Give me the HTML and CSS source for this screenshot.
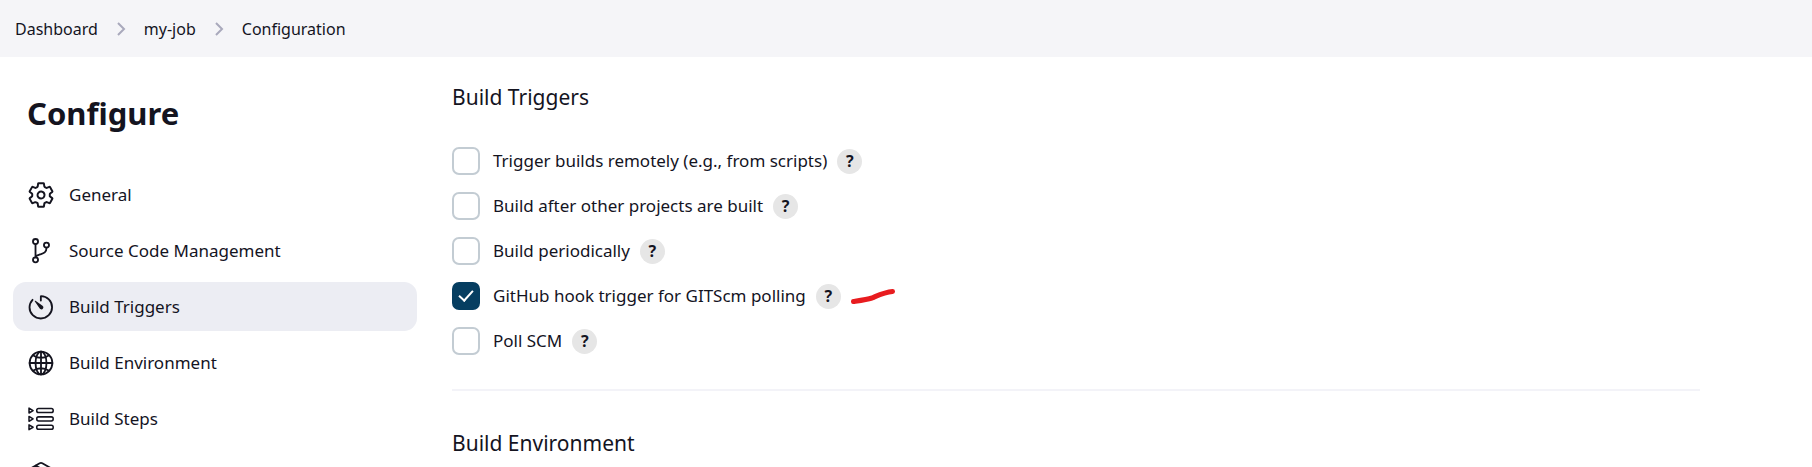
FILE: index.html
```html
<!DOCTYPE html>
<html lang="en">
<head>
<meta charset="utf-8">
<title>my-job Configuration</title>
<link rel="stylesheet" href="styles.css">
</head>
<body>
<nav class="breadcrumbs" aria-label="Breadcrumb">
  <a href="#">Dashboard</a>
  <svg class="chevron" viewBox="0 0 8 14"><path d="M1 1l6 6-6 6"/></svg>
  <a href="#">my-job</a>
  <svg class="chevron" viewBox="0 0 8 14"><path d="M1 1l6 6-6 6"/></svg>
  <a href="#">Configuration</a>
</nav>
<div class="page">
  <aside class="sidebar">
    <h1 class="sidebar-title">Configure</h1>
    <nav class="tasks" aria-label="Configure">
      <a class="task" href="#general">
        <svg class="icon" viewBox="0 0 512 512"><g transform="translate(-20 -20) scale(1.08)"><path d="M262.29 192.31a64 64 0 1057.4 57.4 64.13 64.13 0 00-57.4-57.4zM416.39 256a154.34 154.34 0 01-1.53 20.79l45.21 35.46a10.81 10.81 0 012.45 13.75l-42.77 74a10.81 10.81 0 01-13.14 4.59l-44.9-18.08a16.11 16.11 0 00-15.17 1.75A164.48 164.48 0 01325 400.8a15.94 15.94 0 00-8.82 12.14l-6.73 47.89a11.08 11.08 0 01-10.68 9.17h-85.54a11.11 11.11 0 01-10.69-8.87l-6.72-47.82a16.07 16.07 0 00-9-12.22 155.3 155.3 0 01-21.46-12.57 16 16 0 00-15.11-1.71l-44.89 18.07a10.81 10.81 0 01-13.14-4.58l-42.77-74a10.8 10.8 0 012.45-13.75l38.21-30a16.05 16.05 0 006-14.08c-.36-4.17-.58-8.33-.58-12.5s.21-8.27.58-12.35a16 16 0 00-6.07-13.94l-38.19-30A10.81 10.81 0 0149.48 186l42.77-74a10.81 10.81 0 0113.14-4.59l44.9 18.08a16.11 16.11 0 0015.17-1.75A164.48 164.48 0 01187 111.2a15.94 15.94 0 008.82-12.14l6.73-47.89A11.08 11.08 0 01213.23 42h85.54a11.11 11.11 0 0110.69 8.87l6.72 47.82a16.07 16.07 0 009 12.22 155.3 155.3 0 0121.46 12.57 16 16 0 0015.11 1.71l44.89-18.07a10.81 10.81 0 0113.14 4.58l42.77 74a10.8 10.8 0 01-2.45 13.75l-38.21 30a16.05 16.05 0 00-6.05 14.08c.33 4.14.55 8.3.55 12.47z"/></g></svg>
        General
      </a>
      <a class="task" href="#scm">
        <svg class="icon" viewBox="0 0 512 512"><circle cx="148" cy="70" r="50"/><circle cx="148" cy="430" r="50"/><circle cx="364" cy="140" r="50"/><path d="M148 380V120M364 190c0 100-60 112-130 134-56 18-86 26-86 56"/></svg>
        Source Code Management
      </a>
      <a class="task task-active" href="#triggers" aria-current="true">
        <svg class="icon" viewBox="0 0 512 512"><path d="M90 114A218 218 0 0030 260c-1 122 98 222 222 222 122 0 222-98 222-220 0-120-97-218-216-220a5 5 0 00-5 5V130"/><path class="solid" d="M231 285l-96-138a9 9 0 0113-13l138 96a38 38 0 01-44 64 38 38 0 01-11-9z"/></svg>
        Build Triggers
      </a>
      <a class="task" href="#environment">
        <svg class="icon" viewBox="0 0 512 512"><circle cx="256" cy="256" r="224"/><ellipse cx="256" cy="256" rx="108" ry="224"/><path d="M256 32v448M32 256h448M106 106c41 29 93 46 150 46s109-17 150-46M406 406c-41-29-93-46-150-46s-109 17-150 46"/></svg>
        Build Environment
      </a>
      <a class="task" href="#steps">
        <svg class="icon icon-fine" viewBox="0 0 512 512"><rect x="172" y="50" width="324" height="80" rx="36"/><rect x="172" y="214" width="324" height="80" rx="36"/><rect x="172" y="378" width="324" height="80" rx="36"/><path d="M20 42v96l80-48zM20 206v96l80-48zM20 370v96l80-48z"/></svg>
        Build Steps
      </a>
      <a class="task" href="#post-build" aria-label="Post-build Actions">
        <svg class="icon" viewBox="0 0 512 512"><path d="M464 355V157a50 50 0 00-26-44L282 26a52 52 0 00-52 0L74 113a50 50 0 00-26 44v198a50 50 0 0026 44l156 87a52 52 0 0052 0l156-87a50 50 0 0026-44zM54 136l202 116 202-116M256 486V252M152 70l204 118"/></svg>
      </a>
    </nav>
  </aside>
  <main class="content">
    <section id="triggers">
      <h2 class="section-title">Build Triggers</h2>
      <div class="options">
        <div class="option">
          <input class="check" type="checkbox" id="remote"><label for="remote">Trigger builds remotely (e.g., from scripts)</label>
          <button class="help" type="button" aria-label="Help for remote builds">?</button>
        </div>
        <div class="option">
          <input class="check" type="checkbox" id="after"><label for="after">Build after other projects are built</label>
          <button class="help" type="button" aria-label="Help for upstream projects">?</button>
        </div>
        <div class="option">
          <input class="check" type="checkbox" id="periodic"><label for="periodic">Build periodically</label>
          <button class="help" type="button" aria-label="Help for periodic builds">?</button>
        </div>
        <div class="option">
          <input class="check" type="checkbox" id="github" checked><label for="github">GitHub hook trigger for GITScm polling</label>
          <button class="help" type="button" aria-label="Help for GitHub hook">?</button>
          <svg class="mark" viewBox="0 0 44 16"><path d="M2.500 13.500C9 12.500 16 11.500 21 10c7-3 13-6 20.500-6.500"/></svg>
        </div>
        <div class="option">
          <input class="check" type="checkbox" id="poll"><label for="poll">Poll SCM</label>
          <button class="help" type="button" aria-label="Help for Poll SCM">?</button>
        </div>
      </div>
    </section>
    <section class="next-section" id="environment">
      <h2 class="section-title">Build Environment</h2>
    </section>
  </main>
</div>
</body>
</html>
```
FILE: styles.css
```css
* {
  box-sizing: border-box;
}

html {
  height: 100%;
  overflow: hidden;
}

body {
  height: 100%;
  margin: 0;
  overflow: hidden;
  background: #fff;
  color: #14141f;
  font: 17px/24px "Noto Sans", "Open Sans", sans-serif;
}

a {
  color: inherit;
  text-decoration: none;
}

.breadcrumbs {
  display: flex;
  align-items: center;
  gap: 19px;
  padding: 17px 15px 16px;
  background: #f5f5f8;
  font-size: 16px;
}

.chevron {
  width: 8px;
  height: 14px;
  fill: none;
  stroke: #a9a9bc;
  stroke-width: 2;
  overflow: visible;
}

.page {
  display: flex;
}

.sidebar {
  flex: 0 0 417px;
  padding: 36px 0 0 13px;
}

.sidebar-title {
  margin: 0 0 37px 14px;
  font-size: 31px;
  line-height: 40px;
  font-weight: 700;
}

.tasks {
  display: flex;
  flex-direction: column;
  gap: 7px;
}

.task {
  display: flex;
  align-items: center;
  gap: 15px;
  height: 49px;
  padding: 0 15px;
  border-radius: 13px;
}

.task-active {
  background: #ecedf3;
}

.icon {
  flex: none;
  width: 26px;
  height: 26px;
  fill: none;
  stroke: #14141f;
  stroke-width: 36;
  stroke-linecap: round;
  stroke-linejoin: round;
}

.icon-fine {
  stroke-width: 30;
}

.icon .solid {
  fill: #14141f;
  stroke: none;
}

.content {
  flex: 1;
  padding: 24px 112px 0 35px;
}

.section-title {
  margin: 0;
  font-size: 21px;
  line-height: 32px;
  font-weight: 400;
}

.options {
  display: flex;
  flex-direction: column;
  gap: 17px;
  padding: 34px 0;
}

.option {
  display: flex;
  align-items: center;
  height: 28px;
  gap: 10px;
}

.check {
  appearance: none;
  display: grid;
  place-items: center;
  width: 28px;
  height: 28px;
  margin: 0 3px 0 0;
  border: 2px solid #c3ccd3;
  border-radius: 7px;
  background: #fff;
}

.check:checked {
  border-color: #063e61;
  background: #063e61;
}

.check:checked::before {
  content: "";
  width: 6px;
  height: 12px;
  margin-bottom: 4px;
  border: solid #fff;
  border-width: 0 2px 2px 0;
  transform: rotate(42deg);
}

.help {
  width: 25px;
  height: 25px;
  padding: 0;
  border: 0;
  border-radius: 50%;
  background: #e6e6e6;
  color: #14141f;
  font: 700 16px/25px "Noto Sans", sans-serif;
}

.mark {
  width: 44px;
  height: 16px;
  fill: none;
  stroke: #e81c1f;
  stroke-width: 5;
  stroke-linecap: round;
}

.next-section {
  padding-top: 36px;
  border-top: 2px solid #f3f3f8;
}
```
